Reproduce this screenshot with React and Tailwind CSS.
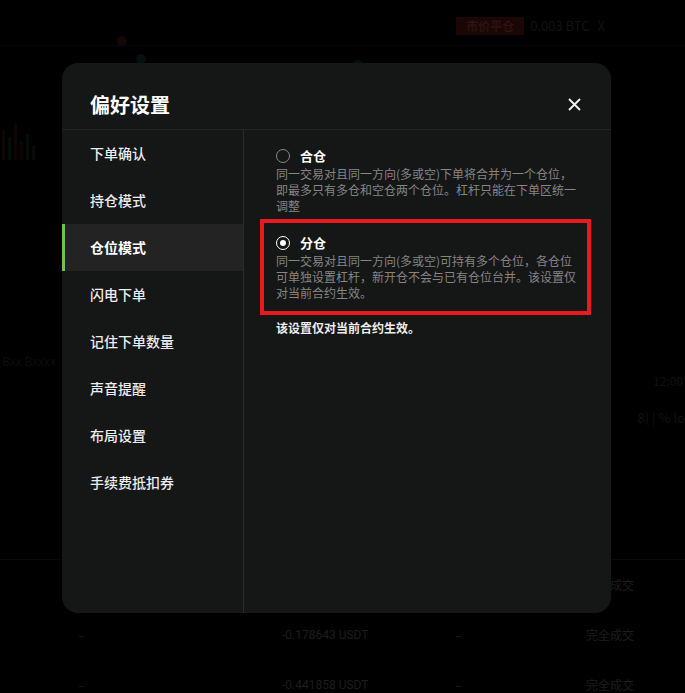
import { useState } from 'react'

const menu = [
  '下单确认',
  '持仓模式',
  '仓位模式',
  '闪电下单',
  '记住下单数量',
  '声音提醒',
  '布局设置',
  '手续费抵扣券',
]

const options = [
  {
    key: 'cross',
    label: '合仓',
    desc: '同一交易对且同一方向(多或空)下单将合并为一个仓位，即最多只有多仓和空仓两个仓位。杠杆只能在下单区统一调整',
  },
  {
    key: 'isolated',
    label: '分仓',
    desc: '同一交易对且同一方向(多或空)可持有多个仓位，各仓位可单独设置杠杆，新开仓不会与已有仓位台并。该设置仅对当前合约生效。',
  },
]

const orders = [
  { amount: '', status: '完全成交' },
  { amount: '-0.178643 USDT', status: '完全成交' },
  { amount: '-0.441858 USDT', status: '完全成交' },
]

function Radio({ checked }) {
  if (checked) {
    return (
      <span className="flex h-[14px] w-[14px] items-center justify-center rounded-full border-[1.5px] border-white">
        <span className="h-[6px] w-[6px] rounded-full bg-white" />
      </span>
    )
  }
  return <span className="h-[14px] w-[14px] rounded-full border-[1.5px] border-[#8a8a8a]" />
}

function Option({ item, checked, onSelect }) {
  return (
    <button type="button" onClick={onSelect} className="block w-[304px] text-left">
      <div className="flex h-[18px] items-center gap-[10px]">
        <Radio checked={checked} />
        <span className="text-[13px] font-bold text-white">{item.label}</span>
      </div>
      <p className="mt-[1px] text-[12px] leading-[16px] text-[#858585]">{item.desc}</p>
    </button>
  )
}

function CloseIcon() {
  return (
    <svg width="13" height="13" viewBox="0 0 13 13" fill="none" stroke="#f2f2f2" strokeWidth="1.8">
      <path d="M1 1l11 11M12 1L1 12" />
    </svg>
  )
}

// dimmed trading page underneath the dialog
function Backdrop() {
  return (
    <div className="flex h-full flex-col text-[#1d1d1d]">
      <div className="flex h-[46px] items-start justify-end border-b border-[#080808] pr-[80px] pt-[17px]">
        <span className="flex h-[18px] items-center bg-[#1a0604] px-[10px] text-[12px] font-bold text-[#2c1410]">
          市价平仓
        </span>
        <span className="ml-[6px] text-[13px] leading-[18px] text-[#121212]">0.003 BTC</span>
        <span className="ml-[8px] text-[13px] leading-[18px] text-[#121212]">X</span>
      </div>
      <div className="relative flex-1">
        <span className="absolute left-[117px] top-[-10px] h-[10px] w-[10px] rounded-full bg-[#120805]" />
        <span className="absolute left-[136px] top-[8px] h-[10px] w-[10px] rounded-full bg-[#041011]" />
        <span className="absolute left-[335px] top-[30px] h-[10px] w-[10px] rounded-full bg-[#120805]" />
        <span className="absolute left-[352px] top-[14px] h-[12px] w-[12px] rounded-full bg-[#041011]" />
        <div className="absolute left-[2px] top-[78px] flex items-end gap-[3px]">
          <span className="h-[30px] w-[3px] bg-[#0e0505]" />
          <span className="h-[22px] w-[3px] bg-[#050e06]" />
          <span className="h-[36px] w-[3px] bg-[#0e0505]" />
          <span className="h-[18px] w-[3px] bg-[#0e0505]" />
          <span className="h-[26px] w-[3px] bg-[#050e06]" />
          <span className="h-[14px] w-[3px] bg-[#0a0a0a]" />
        </div>
        <span className="absolute left-[2px] top-[306px] text-[12px] text-[#0c0c0c]">Bxx Bxxxx</span>
        <span className="absolute right-[2px] top-[326px] text-[12px] text-[#111111]">12:00</span>
        <span className="absolute right-[0px] top-[362px] text-[13px] text-[#121212]">8) | % lo</span>
      </div>
      <div className="mb-[-17px] flex flex-col border-t border-[#090909] text-[12px]">
        {orders.map((o, i) => (
          <div key={i} className="flex h-[50px] items-center pl-[78px] pr-[51px]">
            <span className="w-[204px]">{o.amount ? '–' : ''}</span>
            <span className="w-[173px] font-['Roboto',sans-serif]">{o.amount}</span>
            <span className="flex-1">{o.amount ? '–' : ''}</span>
            <span>{o.status}</span>
          </div>
        ))}
      </div>
    </div>
  )
}

export default function App() {
  const [active, setActive] = useState(2)
  const [mode, setMode] = useState('isolated')

  return (
    <div className="relative h-[693px] w-full overflow-hidden bg-black font-['Noto_Sans_CJK_SC',sans-serif]">
      <Backdrop />

      <div className="absolute left-[62px] top-[63px] flex h-[550px] w-[549px] flex-col overflow-hidden rounded-[16px] bg-[#151616]">
        <div className="flex h-[67px] shrink-0 items-end justify-between border-b border-[#232424] pb-[10px] pl-[28px] pr-[30px]">
          <h1 className="text-[20px] font-bold leading-[28px] text-white">偏好设置</h1>
          <button type="button" className="mb-[8px]">
            <CloseIcon />
          </button>
        </div>

        <div className="flex flex-1">
          <nav className="w-[182px] shrink-0 border-r border-[#2a2b2b]">
            {menu.map((name, i) => (
              <button
                key={name}
                type="button"
                onClick={() => setActive(i)}
                className={
                  i === active
                    ? 'flex h-[47px] w-full items-center border-l-[3px] border-[#72bf52] bg-[#232323] pl-[25px] text-[14px] font-bold text-white'
                    : 'flex h-[47px] w-full items-center pl-[28px] text-[14px] font-medium text-[#ececec]'
                }
              >
                {name}
              </button>
            ))}
          </nav>

          <div className="flex flex-1 flex-col pl-[32px] pt-[17px]">
            <Option item={options[0]} checked={mode === 'cross'} onSelect={() => setMode('cross')} />
            <div className="ml-[-16px] mt-[5px] w-[331px] border-4 border-[#e8191f] pb-[10px] pl-[12px] pt-[11px]">
              <Option item={options[1]} checked={mode === 'isolated'} onSelect={() => setMode('isolated')} />
            </div>
            <p className="mt-[5px] text-[12px] font-bold leading-[16px] text-[#ededed]">该设置仅对当前合约生效。</p>
          </div>
        </div>
      </div>
    </div>
  )
}
